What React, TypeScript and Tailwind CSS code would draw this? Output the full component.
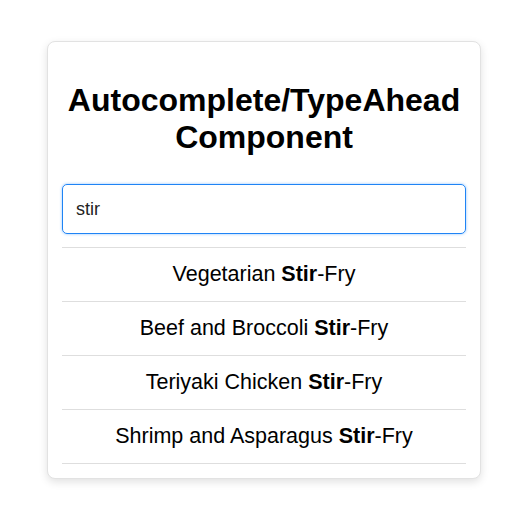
import { useState } from 'react'

// Autocomplete / TypeAhead demo — matches are bolded inside each suggestion.

const RECIPES = [
  'Vegetarian Stir-Fry',
  'Beef and Broccoli Stir-Fry',
  'Teriyaki Chicken Stir-Fry',
  'Shrimp and Asparagus Stir-Fry',
]

function Highlight({ text, query }: { text: string; query: string }) {
  const i = text.toLowerCase().indexOf(query.toLowerCase())
  if (!query || i < 0) return <>{text}</>
  return (
    <>
      {text.slice(0, i)}
      <strong className="font-bold">{text.slice(i, i + query.length)}</strong>
      {text.slice(i + query.length)}
    </>
  )
}

export default function App() {
  const [query, setQuery] = useState('stir')
  const matches = RECIPES.filter((r) => r.toLowerCase().includes(query.toLowerCase()))

  return (
    <div
      className="min-h-[532px] bg-white text-black"
      style={{ fontFamily: '"Liberation Sans", Arial, sans-serif' }}
    >
      <div className="ml-[47px] pt-[41px]">
        <div className="w-[434px] rounded-lg border border-[#e2e2e2] bg-white p-[14px] shadow-[0_3px_8px_rgba(0,0,0,0.12)]">
          <h1 className="mt-[26px] text-center text-[32px] font-bold leading-[37px]">
            Autocomplete/TypeAhead Component
          </h1>
          <input
            autoFocus
            value={query}
            onChange={(e) => setQuery(e.target.value)}
            className="mt-[28px] block h-[50px] w-full rounded-[5px] border border-[#1f84f5] px-[13px] text-[18px] text-[#222] shadow-[0_0_3px_rgba(0,123,255,0.45)] outline-none"
          />
          <ul className="mt-[13px] border-t border-[#dedede]">
            {matches.map((m) => (
              <li
                key={m}
                className="flex h-[54px] items-center justify-center border-b border-[#dedede] text-[21.5px]"
              >
                <span>
                  <Highlight text={m} query={query} />
                </span>
              </li>
            ))}
          </ul>
        </div>
      </div>
    </div>
  )
}
